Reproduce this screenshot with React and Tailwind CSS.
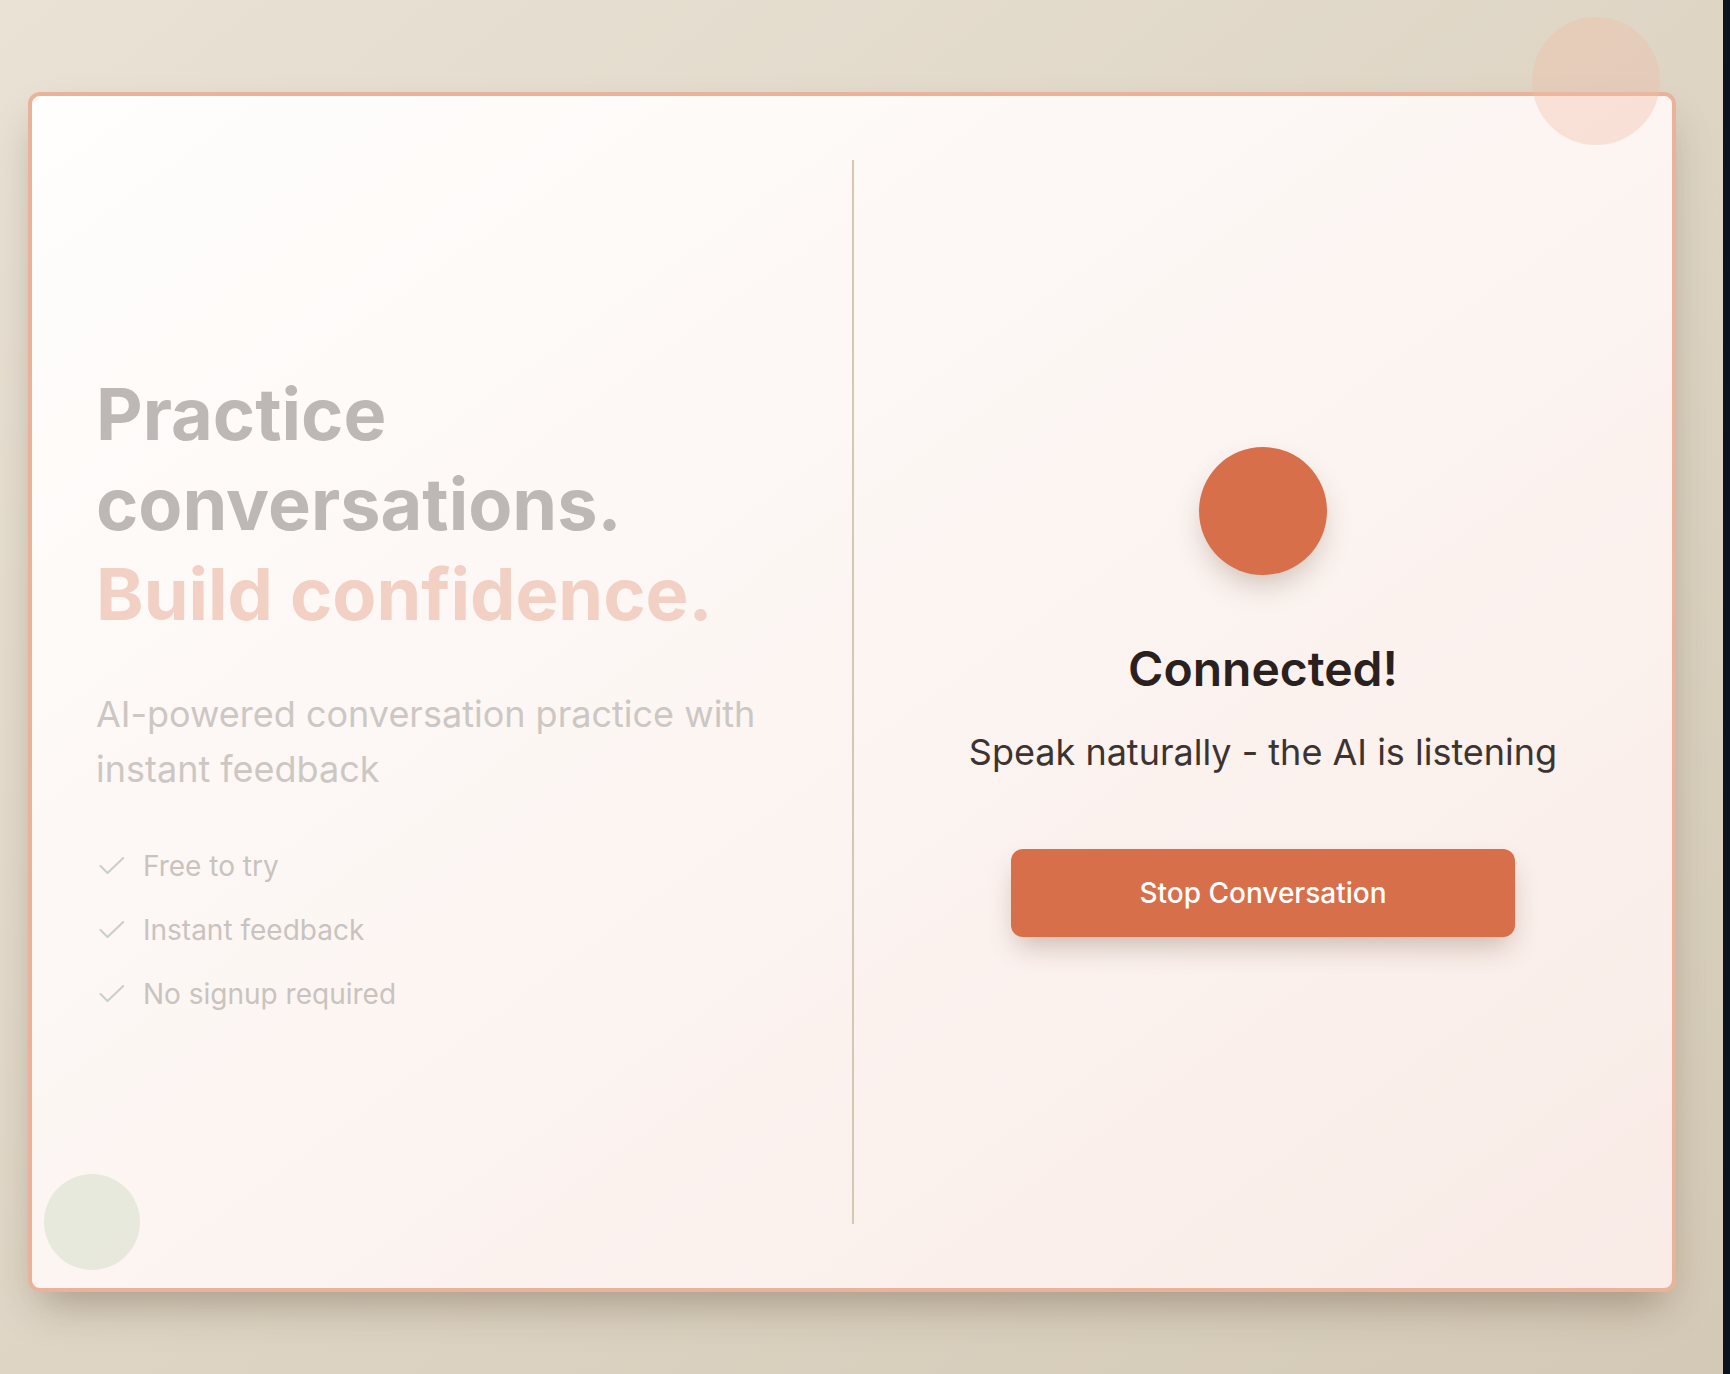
import { useState } from 'react';

const features = ['Free to try', 'Instant feedback', 'No signup required'];

function CheckMark() {
  return (
    <svg width="28" height="18" viewBox="0 0 28 18" fill="none" className="shrink-0">
      <polyline
        points="4.5,9 11.5,16 27.5,0.8"
        stroke="#c9d0c3"
        strokeWidth="2"
        strokeLinecap="round"
        strokeLinejoin="round"
      />
    </svg>
  );
}

export default function App() {
  const [connected, setConnected] = useState(true);

  return (
    <div className="flex min-h-[1374px] w-full font-['Inter',sans-serif]">
      <main className="flex-1 bg-gradient-to-br from-[#e9e2d5] to-[#d4c9b6] pl-[28px] pt-[92px]">
        <div className="relative h-[1200px] w-[1648px] rounded-xl border-4 border-[#ebb29a] bg-gradient-to-br from-[#fffefd] via-[#fcf5f2] to-[#f9ebe6] shadow-[0_22px_40px_-12px_rgba(60,40,20,0.35)]">
          <div className="absolute -top-[79px] right-[12px] h-[128px] w-[128px] rounded-full bg-[rgba(240,188,166,0.36)]" />
          <div className="absolute bottom-[18px] left-[12px] h-[96px] w-[96px] rounded-full bg-[rgba(200,214,188,0.4)]" />

          <div className="grid h-full grid-cols-2 p-16">
            <section className="flex flex-col justify-center pr-16">
              <h1 className="text-[72px] font-bold leading-[1.25] text-[#bdb8b5]">
                Practice conversations.
                <br />
                <span className="text-[#f2d0c3]">Build confidence.</span>
              </h1>
              <p className="mt-12 text-4xl leading-[55px] text-[#cdc7c3]">
                AI-powered conversation practice with instant feedback
              </p>
              <ul className="mt-12 flex flex-col gap-[22px]">
                {features.map((item) => (
                  <li key={item} className="flex items-center gap-[19px] text-[28px] leading-[42px] text-[#c9c3bf]">
                    <CheckMark />
                    {item}
                  </li>
                ))}
              </ul>
            </section>

            <section className="flex flex-col items-center justify-center border-l-2 border-[#d5c7b6] pl-16">
              <div className="h-32 w-32 rounded-full bg-[#d76f4b] shadow-[0_14px_30px_-6px_rgba(90,50,30,0.28)]" />
              <h2 className="mt-[70px] text-5xl font-semibold leading-none text-[#2a201d]">
                {connected ? 'Connected!' : 'Disconnected'}
              </h2>
              <p className="mt-8 text-4xl leading-[55px] text-[#3d3330]">
                Speak naturally - the AI is listening
              </p>
              <button
                onClick={() => setConnected(!connected)}
                className="mt-[69px] rounded-xl bg-[#d76f4b] px-32 py-6 text-[28px] font-medium leading-10 text-white shadow-[0_14px_28px_-6px_rgba(90,50,30,0.3)]"
              >
                Stop Conversation
              </button>
            </section>
          </div>
        </div>
      </main>
      <div className="w-[7px] bg-[#0c1320]" />
    </div>
  );
}
